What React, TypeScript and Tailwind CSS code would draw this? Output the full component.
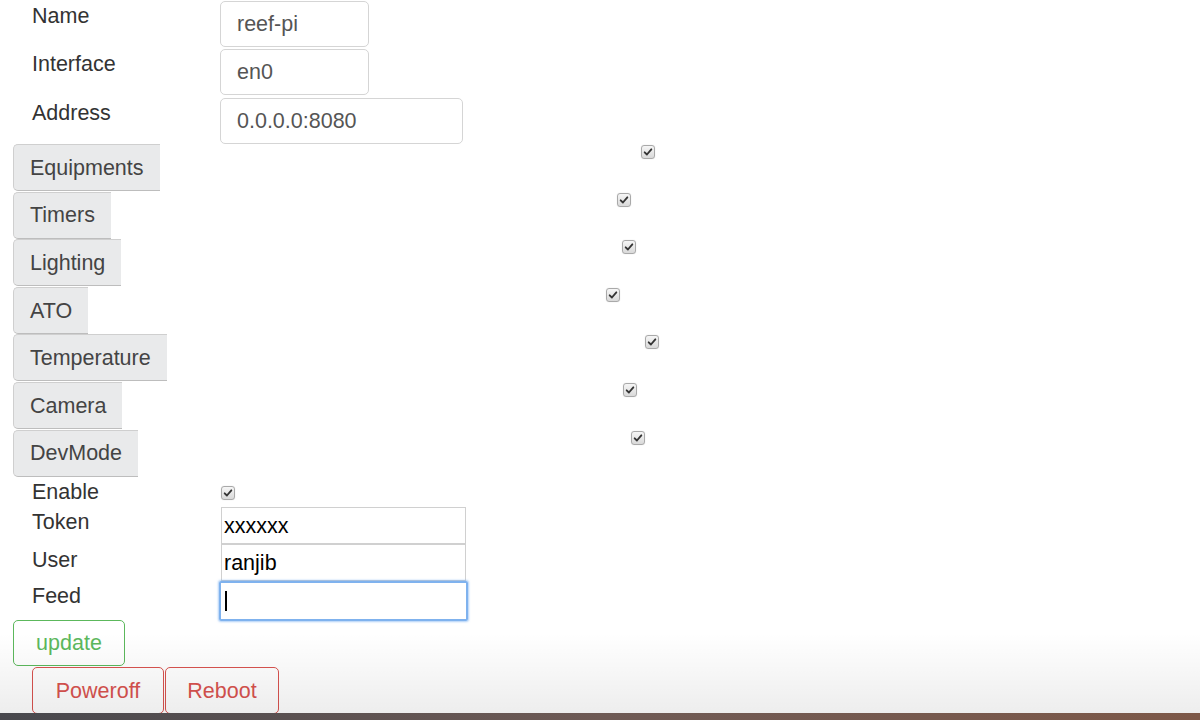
import React from "react";

const font = { fontFamily: '"Liberation Sans", Arial, sans-serif' };

const capabilities = [
  "Equipments",
  "Timers",
  "Lighting",
  "ATO",
  "Temperature",
  "Camera",
  "DevMode",
];

function Check() {
  return (
    <span className="inline-flex w-[14px] h-[14px] items-center justify-center rounded-[3px] border border-[#a9a9a9] bg-gradient-to-b from-[#f6f6f6] to-[#d9d9d9] shadow-[0_0_1px_rgba(0,0,0,0.2)]">
      <svg viewBox="0 0 12 12" className="w-[10px] h-[10px]">
        <path d="M2 6.4 L4.7 9 L10 2.8" fill="none" stroke="#333" strokeWidth="2.2" strokeLinecap="round" strokeLinejoin="round" />
      </svg>
    </span>
  );
}

function SettingRow({ label, value, wide, h }: { label: string; value: string; wide?: boolean; h: string }) {
  return (
    <div className={`flex ${h}`}>
      <label className="w-[220px] pl-8 pt-[1px] leading-[30px]">{label}</label>
      <div
        className={`mt-[1px] ${wide ? "w-[243px]" : "w-[149px]"} h-[46px] rounded-[5px] border border-[#d5d5d5] pl-4 flex items-center text-[#555]`}
      >
        {value}
      </div>
    </div>
  );
}

function PlainRow({ label, children, h }: { label: string; children: React.ReactNode; h: string }) {
  return (
    <div className={`flex ${h}`}>
      <label className="w-[220px] pl-8 leading-[30px]">{label}</label>
      {children}
    </div>
  );
}

export default function App() {
  return (
    <div className="relative w-[1200px] h-[720px] overflow-hidden bg-white text-[21.5px] text-[#333]" style={font}>
      <SettingRow label="Name" value="reef-pi" h="h-[48px]" />
      <SettingRow label="Interface" value="en0" h="h-[49px]" />
      <SettingRow label="Address" value="0.0.0.0:8080" wide h="h-[47px]" />

      {capabilities.map((c) => (
        <div key={c} className="flex h-[47.6px] pr-[63px]">
          <button className="ml-[13px] h-[47px] px-4 pt-[1px] rounded-l-[5px] border border-r-0 border-[#cfcfcf] border-b-[#bdbdbd] bg-[#e9eaeb] text-[#444]">
            {c}
          </button>
          <div className="flex-1 flex justify-center items-start pt-[1px]">
            <Check />
          </div>
        </div>
      ))}

      <PlainRow label="Enable" h="h-[30px]">
        <div className="flex items-start pl-[1px] pt-[9px]">
          <Check />
        </div>
      </PlainRow>
      <PlainRow label="Token" h="h-[37px]">
        <div className="ml-[1px] w-[245px] h-[37px] border border-[#d0d0d0] pl-[2px] flex items-center text-black">xxxxxx</div>
      </PlainRow>
      <PlainRow label="User" h="h-[36px] pt-[1px]">
        <div className="ml-[1px] -mt-[1px] w-[245px] h-[37px] border border-[#d0d0d0] pl-[2px] flex items-center text-black">ranjib</div>
      </PlainRow>
      <PlainRow label="Feed" h="h-[40px] pt-[1px]">
        <div className="-ml-[1px] w-[249px] h-[40px] rounded-[2px] border-2 border-[#7fb2ee] shadow-[0_0_2px_1px_rgba(110,170,240,0.55)] pl-[4px] flex items-center">
          <span className="w-[2px] h-[20px] bg-black" />
        </div>
      </PlainRow>

      <button className="ml-[13px] w-[112px] h-[46px] rounded-[5px] border border-[#5cb85c] text-[#5cb85c]">update</button>

      <div className="flex ml-[32px] mt-[1px]">
        <button className="w-[132px] h-[47px] rounded-[5px] border border-[#d9534f] text-[#d9534f]">Poweroff</button>
        <button className="ml-[1px] w-[114px] h-[47px] rounded-[5px] border border-[#d9534f] text-[#d9534f]">Reboot</button>
      </div>

      {/* window edge shading and dock strip */}
      <div className="pointer-events-none absolute inset-x-0 bottom-[7px] h-[80px] bg-gradient-to-b from-transparent to-black/[0.07]" />
      <div className="pointer-events-none absolute inset-x-0 bottom-0 h-[7px] bg-gradient-to-r from-[#48484d] via-[#6e5a55] to-[#7d5848]" />
    </div>
  );
}
